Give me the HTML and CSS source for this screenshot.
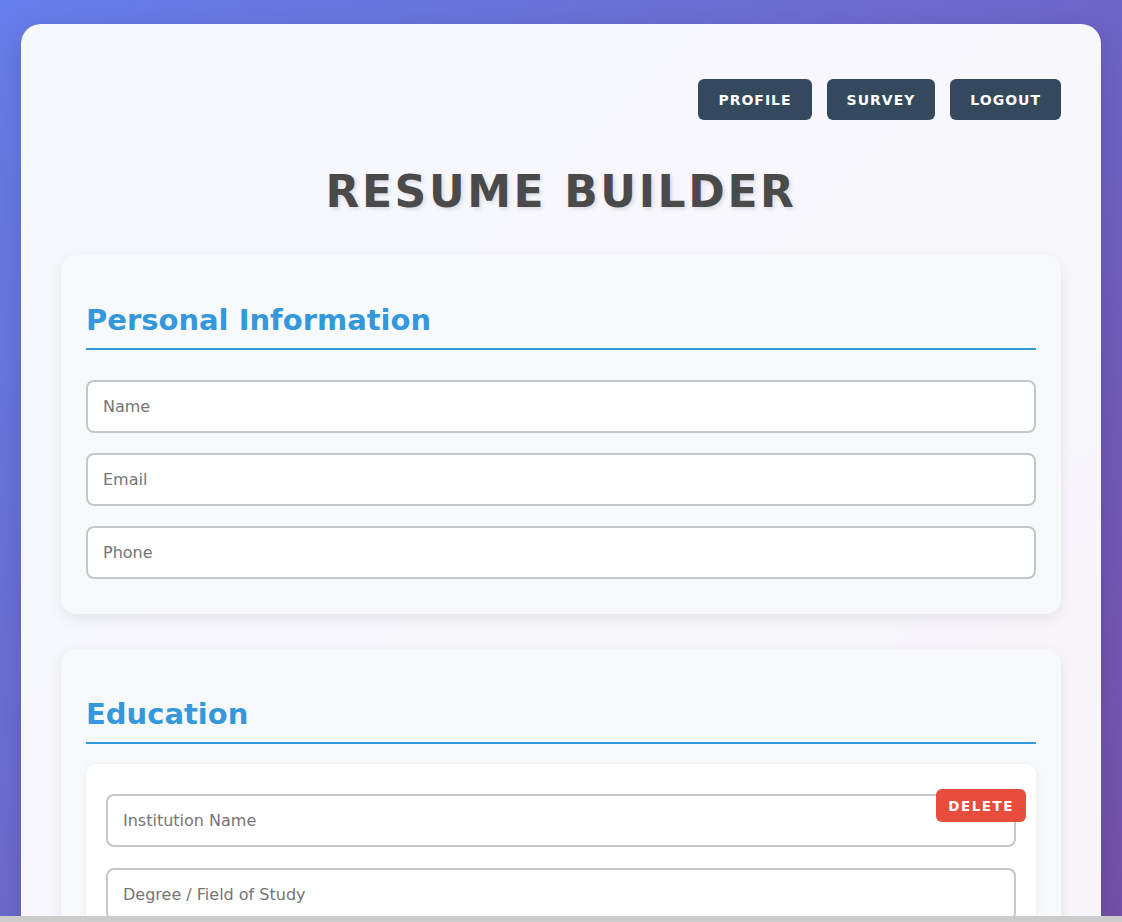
FILE: index.html
```html
<!DOCTYPE html>
<html lang="en">
<head>
<meta charset="utf-8">
<title>Resume Builder</title>
<link rel="stylesheet" href="styles.css">
</head>
<body>
<div class="container">
  <nav class="nav">
    <button class="nav-btn">Profile</button>
    <button class="nav-btn">Survey</button>
    <button class="nav-btn">Logout</button>
  </nav>
  <h1 class="title">Resume Builder</h1>

  <section class="section">
    <h2 class="section-title">Personal Information</h2>
    <div class="fields">
      <input class="field" type="text" placeholder="Name">
      <input class="field" type="email" placeholder="Email">
      <input class="field" type="tel" placeholder="Phone">
    </div>
  </section>

  <section class="section">
    <h2 class="section-title">Education</h2>
    <div class="entry">
      <button class="delete-btn">Delete</button>
      <div class="fields">
        <input class="field" type="text" placeholder="Institution Name">
        <input class="field" type="text" placeholder="Degree / Field of Study">
        <input class="field" type="text" placeholder="Year">
      </div>
    </div>
  </section>
</div>
<div class="hscroll"></div>
</body>
</html>
```

FILE: styles.css
```css
* { box-sizing: border-box; }

html, body {
  margin: 0;
}

body {
  font-family: "DejaVu Sans", "Liberation Sans", sans-serif;
  background: linear-gradient(135deg, #667eea 0%, #764ba2 100%);
  min-height: 100vh;
  padding: 24px 0;
}

.container {
  max-width: 1080px;
  margin: 0 auto;
  background: rgba(255, 255, 255, 0.95);
  border-radius: 20px;
  padding: 55px 40px 40px;
  box-shadow: 0 10px 30px rgba(0, 0, 0, 0.15);
}

.nav {
  display: flex;
  justify-content: flex-end;
  gap: 15px;
}

.nav-btn {
  font-family: inherit;
  background: #34495e;
  color: #fff;
  border: none;
  border-radius: 6px;
  height: 41px;
  padding: 0 20px;
  font-size: 14px;
  font-weight: bold;
  letter-spacing: 1px;
  text-transform: uppercase;
}

.title {
  text-align: center;
  color: #4a4a4a;
  font-size: 44px;
  letter-spacing: 2.6px;
  text-transform: uppercase;
  margin: 46px 0 36px;
  line-height: 1.2;
  text-shadow: 2px 2px 4px rgba(0, 0, 0, 0.12);
}

.section {
  background: #f8f9fa;
  border-radius: 15px;
  padding: 48px 25px 35px;
  margin-bottom: 35px;
  box-shadow: 0 5px 15px rgba(0, 0, 0, 0.08);
}

.section-title {
  color: #3498db;
  font-size: 29px;
  margin: 0 0 30px;
  padding-bottom: 10px;
  border-bottom: 2px solid #3498db;
  line-height: 1.2;
}

.fields {
  display: flex;
  flex-direction: column;
  gap: 20.4px;
}

.field {
  display: block;
  width: 100%;
  font-family: inherit;
  font-size: 16px;
  padding: 15px;
  border: 2px solid #c3c7cb;
  border-radius: 8px;
  background: #fff;
  color: #333;
}

.field::placeholder {
  color: #757575;
}

.entry {
  position: relative;
  background: #fff;
  border-radius: 10px;
  margin-top: -10px;
  padding: 30px 20px 20px;
  box-shadow: 0 2px 8px rgba(0, 0, 0, 0.07);
}

.delete-btn {
  position: absolute;
  top: 25px;
  right: 10px;
  font-family: inherit;
  background: #e74c3c;
  color: #fff;
  border: none;
  border-radius: 6px;
  height: 33px;
  padding: 0 12px;
  font-size: 13.5px;
  font-weight: bold;
  letter-spacing: 1.5px;
  text-transform: uppercase;
}

.hscroll {
  position: fixed;
  left: 0;
  right: 0;
  bottom: 0;
  height: 6px;
  background: #cccccc;
}
```
